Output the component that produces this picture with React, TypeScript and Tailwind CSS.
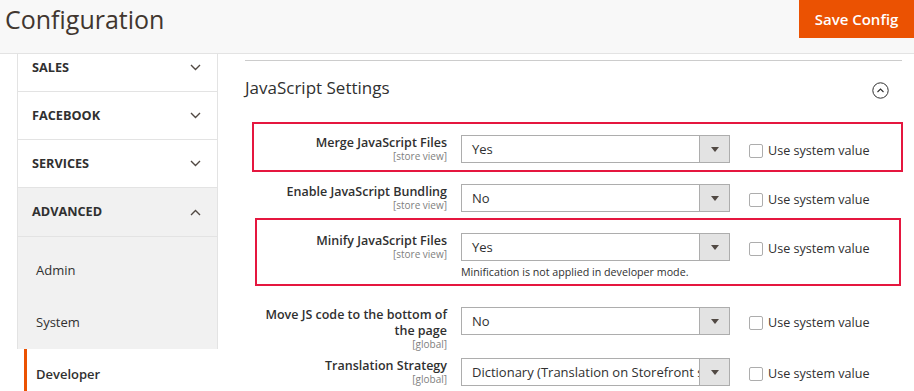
import React from "react";

const Chevron = ({ up = false }: { up?: boolean }) => (
  <svg width="11" height="7" viewBox="0 0 11 7" className="block">
    <path
      d={up ? "M1 6 L5.5 1.5 L10 6" : "M1 1 L5.5 5.5 L10 1"}
      fill="none"
      stroke="#514943"
      strokeWidth="1.4"
    />
  </svg>
);

const Select = ({ value }: { value: string }) => (
  <div className="flex h-[28px] w-[269px] border border-[#adadad] bg-white">
    <div className="flex-1 overflow-hidden whitespace-nowrap pl-[10px] text-[13px] leading-[26px] text-[#303030]">
      {value}
    </div>
    <div className="flex w-[30px] items-center justify-center border-l border-[#adadad] bg-[#e3e3e3]">
      <svg width="8" height="5" viewBox="0 0 8 5">
        <polygon points="0,0 8,0 4,5" fill="#514943" />
      </svg>
    </div>
  </div>
);

const SysVal = () => (
  <div className="ml-[19px] mt-[8px] flex items-center">
    <div className="h-[14px] w-[14px] rounded-[2px] border border-[#adadad] bg-white" />
    <span className="ml-[5px] text-[12.6px] leading-[16px] text-[#303030]">Use system value</span>
  </div>
);

const Row = ({
  label,
  scope,
  value,
  note,
  h,
}: {
  label: React.ReactNode;
  scope: string;
  value: string;
  note?: string;
  h: string;
}) => (
  <div className={`flex items-start ${h}`}>
    <div className="w-[202px] text-right">
      <div className="text-[12.5px] font-semibold leading-[16px] text-[#303030]">{label}</div>
      <div className="text-[10px] leading-[11px] text-[#808080]">{scope}</div>
    </div>
    <div className="ml-[14px]">
      <Select value={value} />
      {note && (
        <div className="mt-[4px] text-[10.7px] leading-[15px] text-[#303030]">{note}</div>
      )}
    </div>
    <SysVal />
  </div>
);

export default function App() {
  return (
    <div
      className="relative h-[391px] w-[914px] overflow-hidden bg-white"
      style={{ fontFamily: '"Open Sans", "Liberation Sans", sans-serif' }}
    >
      {/* Header */}
      <div className="flex h-[54px] items-start justify-between border-b border-[#e3e3e3] bg-[#f8f8f8]">
        <div className="ml-[5px] mt-[5px] text-[25px] leading-[28px] text-[#41362f]">Configuration</div>
        <div className="flex h-[38px] w-[115px] items-center justify-center bg-[#eb5202] text-[15px] font-semibold text-white">
          Save Config
        </div>
      </div>

      <div className="flex">
        {/* Sidebar */}
        <div className="h-[337px] w-[218px] overflow-hidden pl-[17px]">
          <div className="-mt-[10px] w-[201px]">
            {["SALES", "FACEBOOK", "SERVICES"].map((t) => (
              <div
                key={t}
                className="flex h-[48px] items-center justify-between border-b border-l border-r border-[#e3e3e3] pl-[14px] pr-[16px]"
              >
                <span className="text-[12.7px] font-bold text-[#303030]">{t}</span>
                <Chevron />
              </div>
            ))}
            <div className="flex h-[49px] items-center justify-between border-b border-l border-r border-[#e3e3e3] bg-[#f1f1f1] pl-[14px] pr-[16px]">
              <span className="text-[12.7px] font-bold text-[#303030]">ADVANCED</span>
              <Chevron up />
            </div>
            <div className="border-l border-r border-[#e3e3e3] bg-[#f1f1f1] pt-[8px]">
              <div className="flex h-[52px] items-center pl-[18px] text-[13px] text-[#303030]">Admin</div>
              <div className="flex h-[52px] items-center pl-[18px] text-[13px] text-[#303030]">System</div>
            </div>
            <div className="ml-[7px] flex h-[52px] items-center border-l-[3px] border-[#eb5202] pl-[9px] text-[13px] font-semibold text-[#303030]">
              Developer
            </div>
          </div>
        </div>

        {/* Main */}
        <div className="ml-[27px] w-[657px]">
          <div className="mt-[6px] border-t border-[#cccccc]" />
          <div className="flex h-[53px] items-center justify-between">
            <span className="text-[17px] text-[#303030]">JavaScript Settings</span>
            <svg width="17" height="17" viewBox="0 0 17 17" className="mr-[13px] mt-[6px]">
              <circle cx="8.5" cy="8.5" r="7.7" fill="none" stroke="#303030" strokeWidth="1" />
              <path d="M5.5 10 L8.5 7 L11.5 10" fill="none" stroke="#303030" strokeWidth="1.1" />
            </svg>
          </div>
          <div className="pt-[21px]">
            <Row h="h-[49px]" label="Merge JavaScript Files" scope="[store view]" value="Yes" />
            <Row h="h-[49px]" label="Enable JavaScript Bundling" scope="[store view]" value="No" />
            <Row
              h="h-[74px]"
              label="Minify JavaScript Files"
              scope="[store view]"
              value="Yes"
              note="Minification is not applied in developer mode."
            />
            <Row
              h="h-[51px]"
              label={
                <>
                  Move JS code to the bottom of
                  <br />
                  the page
                </>
              }
              scope="[global]"
              value="No"
            />
            <Row
              h="h-[40px]"
              label="Translation Strategy"
              scope="[global]"
              value="Dictionary (Translation on Storefront side)"
            />
          </div>
        </div>
      </div>

      {/* Annotation boxes */}
      <div className="absolute left-[252px] top-[122px] h-[50px] w-[651px] border-2 border-[#e5173f]" />
      <div className="absolute left-[255px] top-[218px] h-[68px] w-[646px] border-2 border-[#e5173f]" />
    </div>
  );
}
